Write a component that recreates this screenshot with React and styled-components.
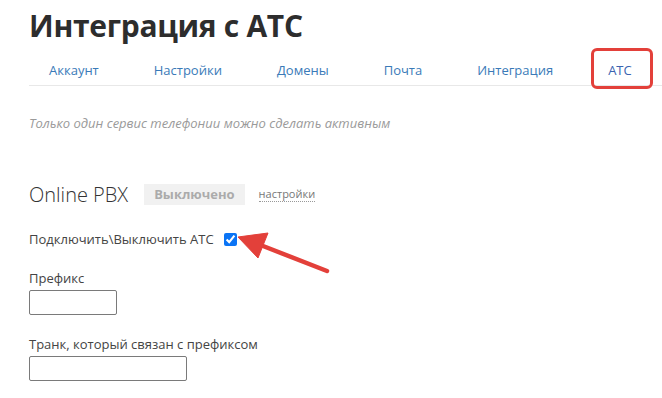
import React from 'react';
import styled, { createGlobalStyle } from 'styled-components';

const GlobalStyle = createGlobalStyle`
  html, body {
    margin: 0;
    padding: 0;
    background: #fff;
  }
  body {
    font-family: 'Open Sans', 'Noto Sans', Arial, sans-serif;
    color: #333;
  }
`;

const Page = styled.div`
  position: relative;
  width: 662px;
  height: 398px;
  overflow: hidden;
  padding-left: 29px;
  box-sizing: border-box;
`;

const Title = styled.h1`
  margin: 0;
  padding-top: 6px;
  font-size: 30px;
  line-height: 40px;
  font-weight: 700;
  color: #2d2d2d;
  letter-spacing: -0.3px;
`;

const Tabs = styled.nav`
  display: flex;
  gap: 55px;
  padding-left: 20px;
  height: 30px;
  margin-top: 9px;
  align-items: center;
  border-bottom: 1px solid #e8e8e8;
`;

const Tab = styled.a`
  position: relative;
  font-size: 13px;
  line-height: 18px;
  color: ${({ $active }) => ($active ? '#3a63b0' : '#3a7ab8')};
  text-decoration: none;
  cursor: pointer;
`;

const Highlight = styled.span`
  position: absolute;
  left: -17px;
  top: -13px;
  width: 56px;
  height: 35px;
  border: 3px solid #e3403a;
  border-radius: 6px;
`;

const Hint = styled.p`
  margin: 28px 0 0;
  font-size: 13px;
  font-style: italic;
  color: #9a9a9a;
`;

const ServiceRow = styled.div`
  display: flex;
  align-items: center;
  margin-top: 49px;
`;

const ServiceName = styled.span`
  font-size: 20px;
  font-weight: 300;
  color: #333;
`;

const StatusBadge = styled.span`
  margin-left: 16px;
  padding: 2px 10px;
  background: #f1f1f1;
  color: #ababab;
  font-size: 13px;
  font-weight: 700;
  line-height: 17px;
`;

const SettingsLink = styled.a`
  margin-left: 14px;
  font-size: 11px;
  color: #777;
  border-bottom: 1px dotted #999;
  line-height: 14px;
  cursor: pointer;
`;

const ToggleRow = styled.label`
  position: relative;
  display: flex;
  align-items: center;
  gap: 10px;
  margin-top: 22px;
  font-size: 13px;
  color: #444;
`;

const Checkbox = styled.input`
  margin: 0;
  width: 13px;
  height: 13px;
  accent-color: #0a74f5;
`;

const Arrow = styled.svg`
  position: absolute;
  left: 200px;
  top: -5px;
`;

const Field = styled.div`
  display: flex;
  flex-direction: column;
  margin-top: ${({ $gap }) => $gap}px;
`;

const FieldLabel = styled.label`
  font-size: 13px;
  color: #444;
  line-height: 17px;
  margin-bottom: 3px;
`;

const TextInput = styled.input`
  box-sizing: border-box;
  width: ${({ $w }) => $w}px;
  height: 25px;
  border: 1px solid #7a7a7a;
  border-radius: 2px;
  padding: 2px 6px;
  font-size: 13px;
`;

const tabs = ['Аккаунт', 'Настройки', 'Домены', 'Почта', 'Интеграция', 'АТС'];

const App = () => (
  <>
    <GlobalStyle />
    <Page>
      <Title>Интеграция с АТС</Title>
      <Tabs>
        {tabs.map((t) => (
          <Tab key={t} $active={t === 'АТС'}>
            {t}
            {t === 'АТС' && <Highlight />}
          </Tab>
        ))}
      </Tabs>
      <Hint>Только один сервис телефонии можно сделать активным</Hint>
      <ServiceRow>
        <ServiceName>Online PBX</ServiceName>
        <StatusBadge>Выключено</StatusBadge>
        <SettingsLink>настройки</SettingsLink>
      </ServiceRow>
      <ToggleRow>
        Подключить\Выключить АТС
        <Checkbox type="checkbox" defaultChecked />
        <Arrow width="110" height="56" viewBox="0 0 110 56">
          <path d="M98 46 L34 21" stroke="#e3403a" strokeWidth="4.5" strokeLinecap="round" />
          <path d="M9 12 L39 8 L29 33 Z" fill="#e3403a" strokeLinejoin="round" stroke="#e3403a" strokeWidth="1" />
        </Arrow>
      </ToggleRow>
      <Field $gap={22}>
        <FieldLabel>Префикс</FieldLabel>
        <TextInput $w={88} />
      </Field>
      <Field $gap={21}>
        <FieldLabel>Транк, который связан с префиксом</FieldLabel>
        <TextInput $w={158} />
      </Field>
    </Page>
  </>
);

export default App;
